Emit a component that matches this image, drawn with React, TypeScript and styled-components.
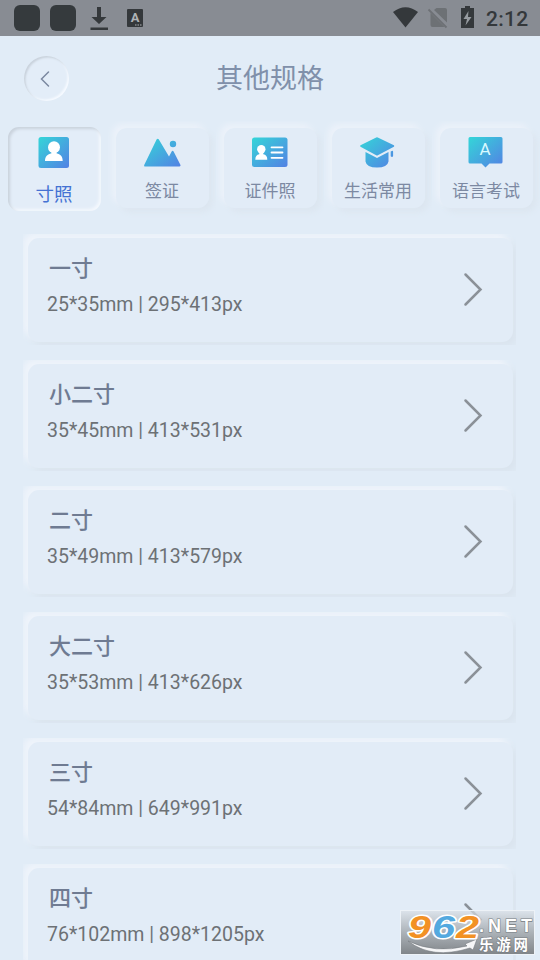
import React from "react";
import styled, { createGlobalStyle, css } from "styled-components";

const GlobalStyle = createGlobalStyle`
  * { box-sizing: border-box; }
  html, body { margin: 0; height: 960px; overflow: hidden; background: #e1ecf7; }
  body { font-family: Roboto, "Noto Sans CJK SC", sans-serif; }
  svg { display: block; flex: none; }
`;

const Screen = styled.div`
  position: relative;
  width: 540px;
  height: 960px;
  overflow: hidden;
  background: #e1ecf7;
`;

const StatusBar = styled.header`
  display: flex;
  justify-content: space-between;
  height: 36px;
  background: #888c93;
`;

const StatusGroup = styled.div`
  display: flex;
  align-items: center;
`;

const AppSquare = styled.span`
  width: 26px;
  height: 26px;
  margin-left: 14px;
  border-radius: 6px;
  background: #353a3d;
  & + & { margin-left: 10px; }
`;

const Clock = styled.time`
  width: 54px;
  padding-top: 2px;
  font-size: 21px;
  line-height: 34px;
  font-weight: 500;
  letter-spacing: 0.3px;
  color: #34383b;
`;

const TitleBar = styled.div`
  display: grid;
  grid-template-columns: 69px 1fr 69px;
  align-items: center;
  height: 85px;
`;

const BackButton = styled.button`
  display: flex;
  align-items: center;
  justify-content: center;
  width: 45px;
  height: 45px;
  margin-left: 24px;
  padding: 0 3px 0 0;
  border: 0;
  border-radius: 50%;
  background: #e3edf8;
  box-shadow: inset 1.5px 1.5px 2px #c9d2dc, inset -1.5px -1.5px 2px #f6faff;
`;

const Title = styled.h1`
  margin: 0;
  text-align: center;
  font-size: 27px;
  line-height: 40px;
  font-weight: 400;
  color: #8090aa;
`;

const Tabs = styled.nav`
  display: grid;
  grid-template-columns: repeat(5, 108px);
  height: 113px;
`;

const TabCell = styled.div`
  padding: 7px 7px 0 8px;
  overflow: hidden;
`;

const Tab = styled.div<{ $active?: boolean }>`
  display: flex;
  flex-direction: column;
  align-items: center;
  width: 93px;
  height: 80px;
  padding: 7px 1px 0 0;
  border-radius: 11px;
  color: #7c89a2;
  background: #e2ecf7;
  box-shadow: -4px -4px 6px #ecf2fa, 4px 4px 6px #dce6f0;
  ${(p) =>
    p.$active &&
    css`
      height: 84px;
      margin-top: -1px;
      padding: 8px 1px 0 0;
      color: #4472d3;
      background: #e3edf8;
      box-shadow: inset 2px 2px 3px #c9d2dc, inset -2px -2px 3px #f4f8fd;
    `}
`;

const TabLabel = styled.span<{ $active?: boolean }>`
  margin-top: ${(p) => (p.$active ? 12 : 8)}px;
  font-size: ${(p) => (p.$active ? 18.5 : 17)}px;
  line-height: 28px;
  white-space: nowrap;
`;

const List = styled.main`
  display: flex;
  flex-direction: column;
  gap: 15px;
  padding-left: 23px;
`;

const CardClip = styled.div`
  flex: none;
  width: 493px;
  height: 111px;
  padding: 4px 3px 3px 5px;
  overflow: hidden;
`;

const Card = styled.article`
  display: flex;
  align-items: center;
  justify-content: space-between;
  height: 104px;
  padding: 0 30px 0 19px;
  border-radius: 11px;
  background: #e2ecf7;
  box-shadow: -5px -5px 7px #eff4fb, 5px 5px 8px #dae4ee;
`;

const CardText = styled.div`
  align-self: flex-start;
  padding-top: 15px;
`;

const SizeName = styled.h2`
  margin: 0 0 0 2px;
  font-size: 22px;
  line-height: 32px;
  font-weight: 500;
  color: #6f7b92;
`;

const SizeDetail = styled.p`
  margin: 7px 0 0;
  font-size: 19.5px;
  line-height: 26px;
  color: #6d7175;
`;

const Watermark = styled.aside`
  position: absolute;
  left: 400px;
  top: 910px;
  width: 135px;
  height: 45px;
  border: 1px solid #edf2f7;
  background: linear-gradient(rgba(216, 222, 228, 0.7), rgba(164, 170, 175, 0.88) 50%, #81868a);
`;

const ShadeHolder = styled.div`
  position: absolute;
`;

const Shade = () => (
  <svg width="0" height="0" aria-hidden="true">
    <defs>
      <linearGradient id="tab-shade" x1="0" y1="0" x2="1" y2="1">
        <stop offset="0" stopColor="#34d6d8" />
        <stop offset="1" stopColor="#5381e4" />
      </linearGradient>
    </defs>
  </svg>
);

const fill = "url(#tab-shade)";

const PortraitIcon = () => (
  <svg width="36" height="34" viewBox="0 0 36 34">
    <rect x="2.5" y="2" width="30.5" height="31" rx="2.5" fill={fill} />
    <circle cx="18" cy="12.200" r="6" fill="#fff" />
    <path d="M15.500 15h5v3.200c4 1 6.200 3.300 6.200 7.800H9c0-4.500 2.500-6.800 6.500-7.800z" fill="#fff" />
  </svg>
);

const MountainIcon = () => (
  <svg width="38" height="34" viewBox="0 0 38 34">
    <path
      d="M13.700 4.300Q14.700 3 15.700 4.300L26 21.500l2.800-5.300q1-1 1.800.2L37.500 30q.3 1.400-1 1.400H2q-1.400 0-.8-1.500zM30 5.800a3.200 3.200 0 1 1 0 6.400 3.200 3.200 0 0 1 0-6.400z"
      fill={fill}
    />
  </svg>
);

const IdCardIcon = () => (
  <svg width="38" height="34" viewBox="0 0 38 34">
    <rect x="1" y="2.500" width="35.500" height="29.500" rx="2.500" fill={fill} />
    <circle cx="10.300" cy="14.300" r="4.200" fill="#fff" />
    <path d="M8.300 16h4v3.200q4 .6 4 5.500H4.300q0-4.900 4-5.500z" fill="#fff" />
    <path d="M20.500 12.300h11M20.500 17.500h11M20.500 22.800h11" stroke="#fff" strokeWidth="1.800" strokeLinecap="round" />
  </svg>
);

const CapIcon = () => (
  <svg width="38" height="34" viewBox="0 0 38 34">
    <path
      d="M17.200 2.500q.8-.5 1.600 0L34.900 10.300q.8.700 0 1.400L18.800 20.300q-.8.500-1.600 0L1.500 11.700q-.8-.7 0-1.400zM6.500 17l11.500 6 11.500-6v9.500q-1 6-11.500 6t-11.500-6zM31.700 16.500l1.700-.8q.7 0 .7 1v4.600q-1 1.300-2.400 0z"
      fill={fill}
    />
  </svg>
);

const LanguageIcon = () => (
  <svg width="38" height="34" viewBox="0 0 38 34">
    <path d="M3 2h31q1.500 0 1.500 1.500V27q0 1.500-1.500 1.500h-11.500l-4 4-4-4h-11.500q-1.500 0-1.500-1.500V3.500Q1.500 2 3 2z" fill={fill} />
    <text x="18" y="20" textAnchor="middle" fontFamily="Roboto, sans-serif" fontSize="17" fill="#d9faff">
      A
    </text>
  </svg>
);

const Chevron = () => (
  <svg width="20" height="36" viewBox="0 0 20 36">
    <path d="M2.500 2.500l15 15-15 15" fill="none" stroke="#8b9198" strokeWidth="2.500" strokeLinecap="round" />
  </svg>
);

const SystemIcons = () => (
  <svg width="94" height="36" viewBox="0 0 94 36">
    <path d="M1 12Q13.500 2.500 26 12L13.500 27.500z" fill="#34383b" />
    <path d="M44.500 8h8.500q2 0 2 2v12.500L42 10zM38.500 13L52.500 27H40.500q-2 0-2-2z" fill="#6d7175" />
    <path d="M36.500 9.500l18 18" stroke="#6d7175" strokeWidth="1.800" />
    <path d="M69 8h4V6h5v2h4v20H69z" fill="#34383b" />
    <path d="M76.500 11l-5 8h3.500l-1.500 6.500 6-8.500h-3.500z" fill="#969ba0" />
  </svg>
);

const DownloadIcons = () => (
  <svg width="70" height="36" viewBox="0 0 70 36">
    <path d="M21 7h4v10h5.500l-7.500 7-7.500-7h5.500zM14.500 27.500h17.500v2.500H14.500z" fill="#34383b" />
    <rect x="51" y="9" width="16" height="18" rx="1" fill="#34383b" />
    <text x="59" y="22" fontFamily="Roboto, sans-serif" fontSize="13" fontWeight="700" textAnchor="middle" fill="#aeb2b6">
      A
    </text>
    <path d="M59 25h1.500m1 0h1.500m1 0h1.500" stroke="#aeb2b6" />
  </svg>
);

const tabs = [
  { label: "寸照", Icon: PortraitIcon, active: true },
  { label: "签证", Icon: MountainIcon },
  { label: "证件照", Icon: IdCardIcon },
  { label: "生活常用", Icon: CapIcon },
  { label: "语言考试", Icon: LanguageIcon },
];

const sizes = [
  ["一寸", "25*35mm | 295*413px"],
  ["小二寸", "35*45mm | 413*531px"],
  ["二寸", "35*49mm | 413*579px"],
  ["大二寸", "35*53mm | 413*626px"],
  ["三寸", "54*84mm | 649*991px"],
  ["四寸", "76*102mm | 898*1205px"],
];

export default function App() {
  return (
    <Screen>
      <GlobalStyle />
      <ShadeHolder>
        <Shade />
      </ShadeHolder>
      <StatusBar>
        <StatusGroup>
          <AppSquare />
          <AppSquare />
          <DownloadIcons />
        </StatusGroup>
        <StatusGroup>
          <SystemIcons />
          <Clock>2:12</Clock>
        </StatusGroup>
      </StatusBar>
      <TitleBar>
        <BackButton aria-label="返回">
          <svg width="10" height="18" viewBox="0 0 10 18">
            <path d="M8.500 2L1.500 9l7 7" fill="none" stroke="#7c89a0" strokeWidth="1.500" strokeLinecap="round" />
          </svg>
        </BackButton>
        <Title>其他规格</Title>
      </TitleBar>
      <Tabs>
        {tabs.map(({ label, Icon, active }) => (
          <TabCell key={label}>
            <Tab $active={active}>
              <Icon />
              <TabLabel $active={active}>{label}</TabLabel>
            </Tab>
          </TabCell>
        ))}
      </Tabs>
      <List>
        {sizes.map(([name, detail]) => (
          <CardClip key={name}>
            <Card>
              <CardText>
                <SizeName>{name}</SizeName>
                <SizeDetail>{detail}</SizeDetail>
              </CardText>
              <Chevron />
            </Card>
          </CardClip>
        ))}
      </List>
      <Watermark>
        <svg width="133" height="43" viewBox="0 0 133 43" overflow="visible">
          <path d="M7 30Q34 43 66 35l-2-2 12-5-4 11-3-2Q31 49 7 30z" fill="#f5f6f7" stroke="#777c81" strokeWidth=".6" />
          <g
            fontFamily="Liberation Sans, sans-serif"
            fontWeight="700"
            fontStyle="italic"
            fontSize="32"
            strokeLinejoin="round"
            stroke="#fff"
            strokeWidth="3"
            paintOrder="stroke"
          >
            <text x="7" y="26.500" textLength="23" lengthAdjust="spacingAndGlyphs" fill="#f29124">9</text>
            <text x="31" y="26.500" textLength="23" lengthAdjust="spacingAndGlyphs" fill="#54a9df">6</text>
            <text x="55" y="26.500" textLength="23" lengthAdjust="spacingAndGlyphs" fill="#f29124">2</text>
          </g>
          <g fill="#fff" stroke="#777c81" strokeWidth="1.200" paintOrder="stroke" fontWeight="700">
            <text x="78" y="20.500" fontFamily="Liberation Sans, sans-serif" fontSize="18" textLength="53">
              .NET
            </text>
            <text x="78" y="39" fontFamily="Noto Sans CJK SC, sans-serif" fontSize="14.500" textLength="49">
              乐游网
            </text>
          </g>
        </svg>
      </Watermark>
    </Screen>
  );
}
